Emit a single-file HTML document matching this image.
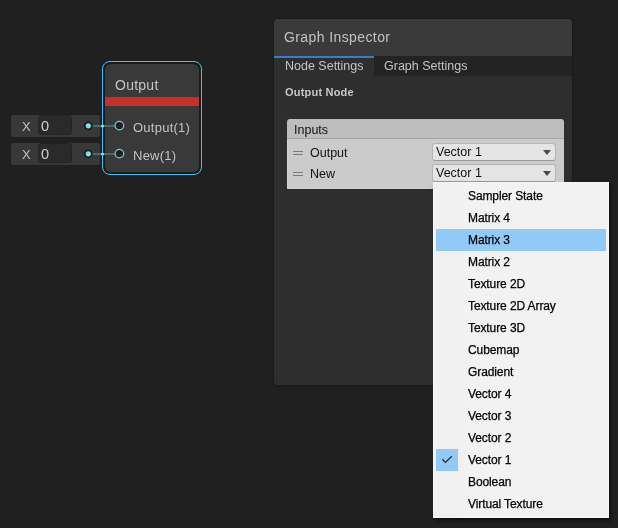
<!DOCTYPE html>
<html><head><meta charset="utf-8">
<style>
*{margin:0;padding:0;box-sizing:border-box}
html,body{width:618px;height:528px;overflow:hidden;background:#202020;font-family:"Liberation Sans",sans-serif}
.a{position:absolute}
.t{position:absolute;white-space:nowrap;line-height:1;will-change:transform}
/* node */
#nodeBorder{left:102px;top:61px;width:100px;height:114px;border:1px solid #44c0ff;border-radius:8px;background:#1b1b1b}
#nodeIn{left:105px;top:64px;width:94px;height:108px;border-radius:6px;background:#393939}
#redbar{left:105px;top:97px;width:94px;height:9px;background:#c7302a}
.fld{left:11px;width:89px;height:22px;background:#383838;border-radius:2px}
.fin{left:38px;width:34px;height:20px;background:#2a2a2a;border:1px solid #252525;border-radius:3px}
.gray{color:#c4c4c4}
/* inspector */
#panel{left:273px;top:18px;width:300px;height:369px;background:#1a1a1a;border-radius:5px}
#pHead{left:274px;top:19px;width:298px;height:37px;background:#3a3a3a;border-radius:4px 4px 0 0}
#pTabs{left:274px;top:56px;width:298px;height:20px;background:#232323}
#pBody{left:274px;top:76px;width:298px;height:309px;background:#2e2e2e;border-radius:0 0 4px 4px}
#tabAct{left:274px;top:56px;width:100px;height:20px;background:#2e2e2e;border-top:2px solid #3a7cc8}
#inHead{left:287px;top:119px;width:277px;height:20px;background:#bdbdbd;border-radius:3px 3px 0 0;border-bottom:1px solid #a5a5a5}
#inBody{left:287px;top:139px;width:277px;height:50px;background:#cbcbcb;border-radius:0 0 1px 1px;box-shadow:inset 1px -1px 0 #d2d2d2,0 1px 0 #272727}
.dd{left:432px;width:124px;height:18px;background:#e4e4e4;border:1px solid #b5b5b5;border-bottom-color:#999;border-radius:3px}
.arr{width:0;height:0;border-left:4px solid transparent;border-right:4px solid transparent;border-top:5px solid #4a4a4a}
.ham{left:293px;width:10px;height:4px;border-top:1px solid #7a7a7a;border-bottom:1px solid #7a7a7a}
/* menu */
#menu{left:433px;top:182px;width:176px;height:336px;background:#f2f2f2;border:1px solid #f8f8f8;box-shadow:1px 1px 0 #0e0e0e,2px 3px 4px rgba(0,0,0,.45)}
.mi{left:468px;font-size:12px;letter-spacing:-.1px;color:#000;-webkit-text-stroke:.25px #000}
</style></head><body>
<!-- input fields -->
<div class="a fld" style="top:115px"></div>
<div class="a fin" style="top:115px"></div>
<div class="t gray" style="left:22px;top:120px;font-size:13px">X</div>
<div class="t" style="left:41px;top:119px;font-size:14.5px;color:#d0d0d0">0</div>
<div class="a fld" style="top:143px"></div>
<div class="a fin" style="top:143px"></div>
<div class="t gray" style="left:22px;top:148px;font-size:13px">X</div>
<div class="t" style="left:41px;top:147px;font-size:14.5px;color:#d0d0d0">0</div>

<!-- node -->
<div class="a" id="nodeBorder"></div>
<div class="a" id="nodeIn"></div>
<div class="a" id="redbar"></div>
<div class="t gray" style="left:115px;top:78px;font-size:14px;letter-spacing:.25px">Output</div>
<div class="t gray" style="left:133px;top:121px;font-size:13px;letter-spacing:.25px">Output(1)</div>
<div class="t gray" style="left:133px;top:149px;font-size:13px;letter-spacing:.25px">New(1)</div>

<svg class="a" style="left:0;top:0" width="618" height="528">
  <g>
    <line x1="88" y1="126" x2="119" y2="126" stroke="#4a6969" stroke-width="2"/>
    <line x1="88" y1="154" x2="119" y2="154" stroke="#4a6969" stroke-width="2"/>
    <circle cx="88.3" cy="125.8" r="4.4" fill="#1e1e1e"/>
    <circle cx="88.3" cy="125.8" r="2.6" fill="#80e2e6"/>
    <circle cx="88.3" cy="153.8" r="4.4" fill="#1e1e1e"/>
    <circle cx="88.3" cy="153.8" r="2.6" fill="#80e2e6"/>
    <circle cx="102.6" cy="126" r="1.6" fill="#7fe0e6"/>
    <circle cx="102.6" cy="154" r="1.6" fill="#7fe0e6"/>
    <circle cx="119.4" cy="125.6" r="4.3" fill="#1f1f1f" stroke="#70d0d5" stroke-width="1.2"/>
    <circle cx="119.4" cy="153.6" r="4.3" fill="#1f1f1f" stroke="#70d0d5" stroke-width="1.2"/>
  </g>
</svg>

<!-- inspector -->
<div class="a" id="panel"></div>
<div class="a" id="pHead"></div>
<div class="a" id="pTabs"></div>
<div class="a" id="pBody"></div>
<div class="a" id="tabAct"></div>
<div class="t" style="left:284px;top:30px;font-size:14px;letter-spacing:.4px;color:#c2c2c2">Graph Inspector</div>
<div class="t" style="left:285px;top:60px;font-size:12.5px;color:#c4c4c4">Node Settings</div>
<div class="t" style="left:384px;top:60px;font-size:12.5px;color:#c4c4c4">Graph Settings</div>
<div class="t" style="left:285px;top:87px;font-size:11px;font-weight:bold;letter-spacing:.2px;color:#c8c8c8">Output Node</div>

<div class="a" id="inHead"></div>
<div class="a" id="inBody"></div>
<div class="t" style="left:294px;top:124px;font-size:12.5px;color:#111">Inputs</div>
<div class="a ham" style="top:151px"></div>
<div class="a ham" style="top:172px"></div>
<div class="t" style="left:310px;top:147px;font-size:12.5px;color:#111">Output</div>
<div class="t" style="left:310px;top:168px;font-size:12.5px;color:#111">New</div>
<div class="a dd" style="top:143px"></div>
<div class="a dd" style="top:164px"></div>
<div class="t" style="left:436px;top:146px;font-size:12.5px;color:#111">Vector 1</div>
<div class="t" style="left:436px;top:167px;font-size:12.5px;color:#111">Vector 1</div>
<div class="a arr" style="left:543px;top:150px"></div>
<div class="a arr" style="left:543px;top:171px"></div>

<!-- menu -->
<div class="a" id="menu"></div>
<div class="a" style="left:434px;top:183px;width:29px;height:334px;background:#f0f0f0"></div>
<div class="a" style="left:436px;top:229px;width:170px;height:22px;background:#91c9f7"></div>
<div class="a" style="left:436px;top:449px;width:22px;height:22px;background:#91c9f7"></div>
<svg class="a" style="left:436px;top:449px" width="22" height="22"><path d="M6.3 10.3 L9.4 13.4 L15.8 7.2" fill="none" stroke="#2a2a2a" stroke-width="1.35"/></svg>
<div class="t mi" style="top:190px">Sampler State</div>
<div class="t mi" style="top:212px">Matrix 4</div>
<div class="t mi" style="top:234px">Matrix 3</div>
<div class="t mi" style="top:256px">Matrix 2</div>
<div class="t mi" style="top:278px">Texture 2D</div>
<div class="t mi" style="top:300px">Texture 2D Array</div>
<div class="t mi" style="top:322px">Texture 3D</div>
<div class="t mi" style="top:344px">Cubemap</div>
<div class="t mi" style="top:366px">Gradient</div>
<div class="t mi" style="top:388px">Vector 4</div>
<div class="t mi" style="top:410px">Vector 3</div>
<div class="t mi" style="top:432px">Vector 2</div>
<div class="t mi" style="top:454px">Vector 1</div>
<div class="t mi" style="top:476px">Boolean</div>
<div class="t mi" style="top:498px">Virtual Texture</div>
</body></html>
